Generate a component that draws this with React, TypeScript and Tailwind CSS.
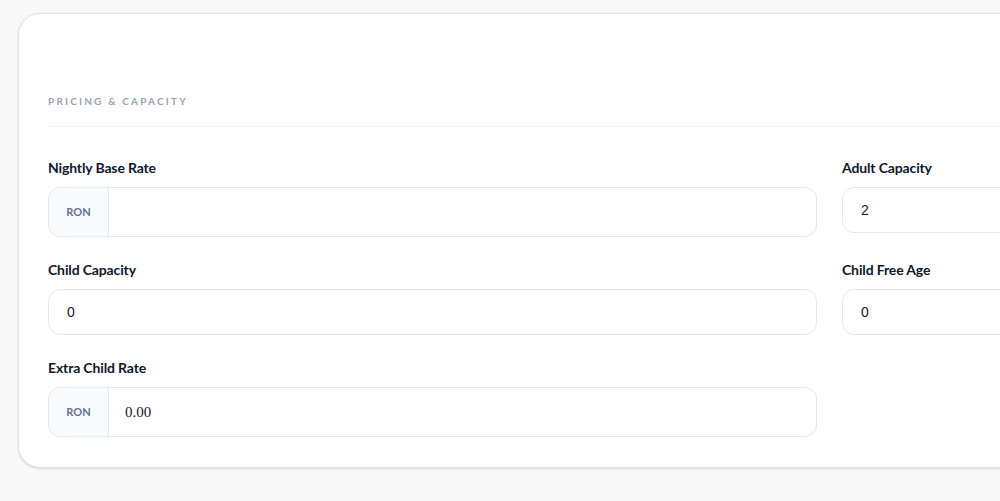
import React from 'react';

const LABEL = 'block text-[14px] leading-[18px] font-bold text-[#0f172a] tracking-[-0.01em] mb-[10px]';
const FONT = { fontFamily: 'Lato, "Noto Sans", sans-serif' };

function MoneyInput({ value }: { value?: string }) {
  return (
    <div className="flex h-[50px] rounded-xl border border-[#e2e8f0] overflow-hidden bg-white">
      <span className="w-[60px] shrink-0 flex items-center justify-center bg-[#f8fafc] border-r border-[#e2e8f0] text-[11px] font-bold text-[#64748b]">
        RON
      </span>
      <input
        readOnly
        value={value ?? ''}
        className="flex-1 px-4 text-[15px] text-[#0f172a] outline-none bg-transparent"
        style={{ fontFamily: '"Liberation Serif", serif' }}
      />
    </div>
  );
}

function NumberInput({ value }: { value: string }) {
  return (
    <input
      readOnly
      value={value}
      className="w-full h-[46px] rounded-xl border border-[#e5e7eb] px-[18px] text-[14px] text-[#111827] outline-none bg-white"
      style={{ fontFamily: '"Liberation Sans", sans-serif' }}
    />
  );
}

export default function App() {
  return (
    <div className="w-full min-h-[501px] bg-[#f9f9f9] overflow-hidden" style={FONT}>
      <div className="pt-[13px] pl-[18px]">
        <div className="w-[1230px] bg-white border border-[#e2e2e2] rounded-[22px] shadow-sm px-[29px] pt-[80px] pb-[30px]">
          <div className="pb-[17px] border-b border-[#f1f5f9] mb-8">
            <h2 className="text-[10px] font-bold uppercase tracking-[0.22em] text-[#94a3b8]">
              Pricing &amp; Capacity
            </h2>
          </div>
          <div className="grid grid-cols-[769px_1fr] gap-x-[25px] gap-y-[24px] items-start">
            <div>
              <label className={LABEL}>Nightly Base Rate</label>
              <MoneyInput />
            </div>
            <div>
              <label className={LABEL}>Adult Capacity</label>
              <NumberInput value="2" />
            </div>
            <div>
              <label className={LABEL}>Child Capacity</label>
              <NumberInput value="0" />
            </div>
            <div>
              <label className={LABEL}>Child Free Age</label>
              <NumberInput value="0" />
            </div>
            <div>
              <label className={LABEL}>Extra Child Rate</label>
              <MoneyInput value="0.00" />
            </div>
          </div>
        </div>
      </div>
    </div>
  );
}
